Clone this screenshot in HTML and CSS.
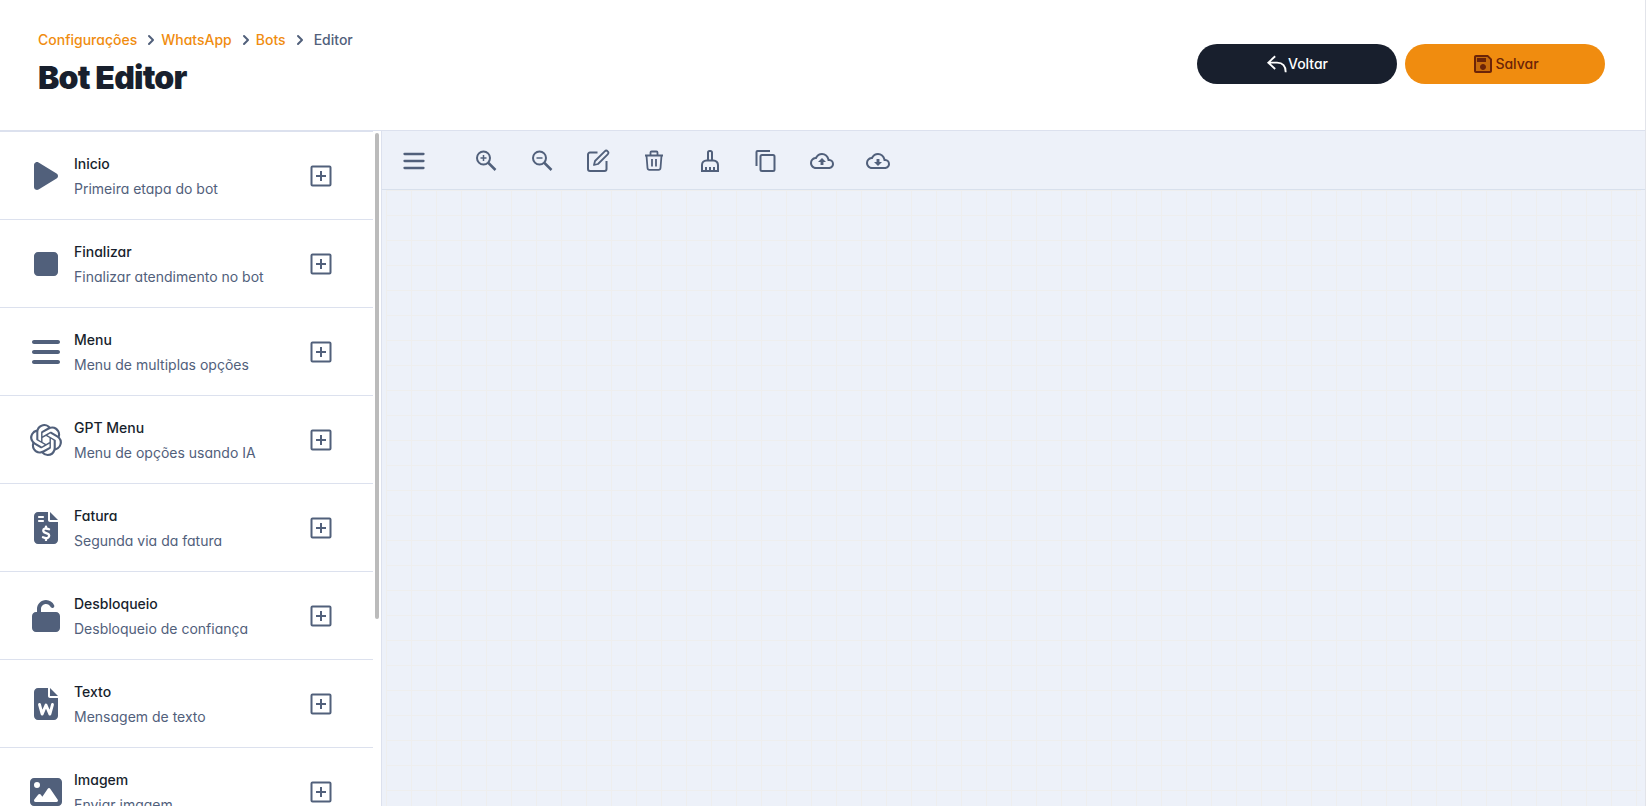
FILE: index.html
```html
<!DOCTYPE html>
<html lang="pt-BR">
<head>
<meta charset="utf-8">
<title>Bot Editor</title>
<link rel="stylesheet" href="styles.css">
</head>
<body>
<svg class="defs" aria-hidden="true">
  <symbol id="plus" viewBox="0 0 24 24"><path fill="none" stroke="currentColor" stroke-width="2" stroke-linejoin="round" d="M3.500 2.500h17a1 1 0 0 1 1 1v17a1 1 0 0 1-1 1h-17a1 1 0 0 1-1-1v-17a1 1 0 0 1 1-1z"/><path fill="none" stroke="currentColor" stroke-width="2" d="M12 7v10M7 12h10"/></symbol>
  <symbol id="chev" viewBox="0 0 20 20"><path fill="currentColor" fill-rule="evenodd" d="M7.293 14.707a1 1 0 0 1 0-1.414L10.586 10 7.293 6.707a1 1 0 0 1 1.414-1.414l4 4a1 1 0 0 1 0 1.414l-4 4a1 1 0 0 1-1.414 0z"/></symbol>
</svg>
<div class="page">
  <header class="header">
    <div class="heading">
      <nav class="crumbs" aria-label="Navegação">
        <a href="#">Configurações</a>
        <svg class="chev"><use href="#chev"/></svg><a href="#">WhatsApp</a>
        <svg class="chev"><use href="#chev"/></svg><a href="#">Bots</a>
        <svg class="chev"><use href="#chev"/></svg><span class="current">Editor</span>
      </nav>
      <h1>Bot Editor</h1>
    </div>
    <div class="actions">
      <button class="btn dark" type="button"><svg viewBox="0 0 24 24" fill="none" stroke="currentColor" stroke-width="2"><path d="M10 3.500 2.500 10.500 10 17.500M2.500 10.500H12c6 0 9.500 3.500 9.500 10.500"/></svg>Voltar</button>
      <button class="btn orange" type="button"><svg viewBox="0 0 24 24"><path fill="currentColor" opacity=".3" d="M5 5v14h14V7.830L16.170 5H5z"/><path fill="currentColor" d="M17 3H5c-1.110 0-2 .9-2 2v14c0 1.100.89 2 2 2h14c1.100 0 2-.9 2-2V7l-4-4zm2 16H5V5h11.170L19 7.830V19zM12 12c-1.660 0-3 1.340-3 3s1.340 3 3 3 3-1.340 3-3-1.340-3-3-3zM6 6h9v4H6z"/></svg>Salvar</button>
    </div>
  </header>
  <main class="main">
    <aside class="sidebar">
      <ul class="list">
        <li class="item"><svg class="icon" viewBox="-64 0 512 512"><path d="M73 39c-14.800-9.100-33.400-9.400-48.500-.9S0 62.600 0 80v352c0 17.400 9.400 33.400 24.500 41.900s33.700 8.100 48.500-.9L361 297c14.300-8.700 23-24.200 23-41s-8.700-32.200-23-41L73 39z"/></svg><div class="text"><strong>Inicio</strong><span>Primeira etapa do bot</span></div><button class="add" type="button" aria-label="Adicionar Inicio"><svg><use href="#plus"/></svg></button></li>
        <li class="item"><svg class="icon" viewBox="-64 0 512 512"><path d="M0 128c0-35.300 28.700-64 64-64h256c35.300 0 64 28.700 64 64v256c0 35.300-28.700 64-64 64H64c-35.300 0-64-28.700-64-64V128z"/></svg><div class="text"><strong>Finalizar</strong><span>Finalizar atendimento no bot</span></div><button class="add" type="button" aria-label="Adicionar Finalizar"><svg><use href="#plus"/></svg></button></li>
        <li class="item"><svg class="icon" viewBox="-32 0 512 512"><path d="M0 96c0-17.700 14.300-32 32-32h384c17.700 0 32 14.300 32 32s-14.300 32-32 32H32C14.300 128 0 113.700 0 96zm0 160c0-17.700 14.300-32 32-32h384c17.700 0 32 14.300 32 32s-14.300 32-32 32H32c-17.700 0-32-14.300-32-32zm448 160c0 17.700-14.300 32-32 32H32c-17.700 0-32-14.300-32-32s14.300-32 32-32h384c17.700 0 32 14.300 32 32z"/></svg><div class="text"><strong>Menu</strong><span>Menu de multiplas opções</span></div><button class="add" type="button" aria-label="Adicionar Menu"><svg><use href="#plus"/></svg></button></li>
        <li class="item"><svg class="icon" viewBox="0 0 24 24"><path d="M22.2819 9.8211a5.9847 5.9847 0 0 0-.5157-4.9108 6.0462 6.0462 0 0 0-6.5098-2.9A6.0651 6.0651 0 0 0 4.9807 4.1818a5.9847 5.9847 0 0 0-3.9977 2.9 6.0462 6.0462 0 0 0 .7427 7.0966 5.98 5.98 0 0 0 .511 4.9107 6.051 6.051 0 0 0 6.5146 2.9001A5.9847 5.9847 0 0 0 13.2599 24a6.0557 6.0557 0 0 0 5.7718-4.2058 5.9894 5.9894 0 0 0 3.9977-2.9001 6.0557 6.0557 0 0 0-.7475-7.073zm-9.022 12.6081a4.4755 4.4755 0 0 1-2.8764-1.0408l.1419-.0804 4.7783-2.7582a.7948.7948 0 0 0 .3927-.6813v-6.7369l2.02 1.1686a.071.071 0 0 1 .038.052v5.5826a4.504 4.504 0 0 1-4.4945 4.4944zm-9.6607-4.1254a4.4708 4.4708 0 0 1-.5346-3.0137l.142.0852 4.783 2.7582a.7712.7712 0 0 0 .7806 0l5.8428-3.3685v2.3324a.0804.0804 0 0 1-.0332.0615L9.74 19.9502a4.4992 4.4992 0 0 1-6.1408-1.6464zM2.3408 7.8956a4.485 4.485 0 0 1 2.3655-1.9728V11.6a.7664.7664 0 0 0 .3879.6765l5.8144 3.3543-2.0201 1.1685a.0757.0757 0 0 1-.071 0l-4.8303-2.7865A4.504 4.504 0 0 1 2.3408 7.872zm16.5963 3.8558L13.1038 8.364 15.1192 7.2a.0757.0757 0 0 1 .071 0l4.8303 2.7913a4.4944 4.4944 0 0 1-.6765 8.1042v-5.6772a.79.79 0 0 0-.407-.667zm2.0107-3.0231l-.142-.0852-4.7735-2.7818a.7759.7759 0 0 0-.7854 0L9.409 9.2297V6.8974a.0662.0662 0 0 1 .0284-.0615l4.8303-2.7866a4.4992 4.4992 0 0 1 6.6802 4.66zM8.3065 12.863l-2.02-1.1638a.0804.0804 0 0 1-.038-.0567V6.0742a4.4992 4.4992 0 0 1 7.3757-3.4537l-.142.0805L8.704 5.459a.7948.7948 0 0 0-.3927.6813zm1.0976-2.3654l2.602-1.4998 2.6069 1.4998v2.9994l-2.5974 1.4997-2.6067-1.4997Z"/></svg><div class="text"><strong>GPT Menu</strong><span>Menu de opções usando IA</span></div><button class="add" type="button" aria-label="Adicionar GPT Menu"><svg><use href="#plus"/></svg></button></li>
        <li class="item"><svg class="icon" viewBox="-64 0 512 512"><path fill-rule="evenodd" d="M64 0h160v128c0 17.700 14.300 32 32 32h128v288c0 35.300-28.700 64-64 64H64c-35.300 0-64-28.700-64-64V64C0 28.700 28.700 0 64 0zM80 64c-8.800 0-16 7.200-16 16s7.200 16 16 16h64c8.800 0 16-7.200 16-16s-7.200-16-16-16H80zm0 64c-8.800 0-16 7.200-16 16s7.200 16 16 16h64c8.800 0 16-7.200 16-16s-7.200-16-16-16H80z"/><path d="M256 0v128h128z"/><path fill="none" stroke="#fff" stroke-width="38" stroke-linecap="round" d="M192 236v24m0 160v26M240 276c-24-10-50-16-68-10-28 9-32 46-6 60 22 12 52 12 68 30 18 24 4 56-26 62-22 4-44-4-64-14"/></svg><div class="text"><strong>Fatura</strong><span>Segunda via da fatura</span></div><button class="add" type="button" aria-label="Adicionar Fatura"><svg><use href="#plus"/></svg></button></li>
        <li class="item"><svg class="icon" viewBox="-32 0 512 512"><path d="M144 144c0-44.200 35.800-80 80-80 31.900 0 59.400 18.600 72.300 45.700 7.600 16 26.700 22.800 42.600 15.200s22.800-26.700 15.200-42.600C331 33.700 281.500 0 224 0 144.500 0 80 64.500 80 144v48H64c-35.300 0-64 28.700-64 64v192c0 35.300 28.700 64 64 64h320c35.300 0 64-28.700 64-64V256c0-35.300-28.700-64-64-64H144v-48z"/></svg><div class="text"><strong>Desbloqueio</strong><span>Desbloqueio de confiança</span></div><button class="add" type="button" aria-label="Adicionar Desbloqueio"><svg><use href="#plus"/></svg></button></li>
        <li class="item"><svg class="icon" viewBox="-64 0 512 512"><path d="M64 0h160v128c0 17.700 14.300 32 32 32h128v288c0 35.300-28.700 64-64 64H64c-35.300 0-64-28.700-64-64V64C0 28.700 28.700 0 64 0z"/><path d="M256 0v128h128z"/><path fill="none" stroke="#fff" stroke-width="46" stroke-linecap="round" stroke-linejoin="round" d="M88 264l42 154 62-146 62 146 42-154"/></svg><div class="text"><strong>Texto</strong><span>Mensagem de texto</span></div><button class="add" type="button" aria-label="Adicionar Texto"><svg><use href="#plus"/></svg></button></li>
        <li class="item"><svg class="icon" viewBox="0 0 512 512"><path d="M0 96c0-35.300 28.700-64 64-64h384c35.300 0 64 28.700 64 64v320c0 35.300-28.700 64-64 64H64c-35.300 0-64-28.700-64-64V96zm323.800 106.500c-4.500-6.600-11.900-10.500-19.800-10.500s-15.400 3.900-19.800 10.500l-87 127.600-26.500-33.100c-4.600-5.700-11.500-9-18.700-9s-14.200 3.300-18.700 9l-64 80c-5.800 7.200-6.900 17.100-2.900 25.400S78.800 416 88 416h336c8.900 0 17.100-4.900 21.200-12.800s3.600-17.400-1.400-24.700l-120-176zM112 192a48 48 0 1 0 0-96 48 48 0 1 0 0 96z"/></svg><div class="text"><strong>Imagem</strong><span>Enviar imagem</span></div><button class="add" type="button" aria-label="Adicionar Imagem"><svg><use href="#plus"/></svg></button></li>
      </ul>
      <div class="track"><div class="thumb"></div></div>
    </aside>
    <section class="editor">
      <div class="toolbar">
        <button class="tool menu" type="button" aria-label="Menu"><svg viewBox="0 0 24 24"><path stroke-width="2.300" d="M2.500 5h19M2.500 12h19M2.500 19h19" stroke-linecap="round"/></svg></button>
        <button class="tool" type="button" aria-label="Ampliar"><svg viewBox="0 0 24 24"><circle cx="9.500" cy="9" r="6.500"/><path stroke-width="2.500" d="M14 13.500l7.500 7.500"/><path stroke-width="1.500" d="M9.500 6v6M6.500 9h6"/></svg></button>
        <button class="tool" type="button" aria-label="Reduzir"><svg viewBox="0 0 24 24"><circle cx="9.500" cy="9" r="6.500"/><path stroke-width="2.500" d="M14 13.500l7.500 7.500"/><path stroke-width="1.500" d="M6.500 9h6"/></svg></button>
        <button class="tool" type="button" aria-label="Editar"><svg viewBox="0 0 24 24" stroke-linejoin="round"><path d="M11.500 3.500H4a2 2 0 0 0-2 2V20a2 2 0 0 0 2 2h14.500a2 2 0 0 0 2-2v-8"/><path stroke-width="1.800" d="M18.700 2.300a2.100 2.100 0 0 1 3 3L12 15l-4 1 1-4 9.700-9.700z"/></svg></button>
        <button class="tool" type="button" aria-label="Excluir"><svg viewBox="0 0 24 24"><path stroke-width="1.800" d="M3 6.500h18M4.500 6.500l1 12.500a2 2 0 0 0 2 1.800h9a2 2 0 0 0 2-1.800l1-12.500M8.500 6V3.500a1 1 0 0 1 1-1h5a1 1 0 0 1 1 1V6M10 10v7.500M14 10v7.500"/></svg></button>
        <button class="tool" type="button" aria-label="Limpar"><svg viewBox="0 0 24 24"><path d="M10 11.500V3.500a1.500 1.500 0 0 1 1.500-1.500h1A1.500 1.500 0 0 1 14 3.500v8M4 22v-6a4.500 4.500 0 0 1 4.500-4.500h7A4.500 4.500 0 0 1 20 16v6H4zM8 22v-4M12 22v-4M16 22v-4"/></svg></button>
        <button class="tool" type="button" aria-label="Copiar"><svg viewBox="0 0 24 24"><path d="M2.500 17V3a1 1 0 0 1 1-1H16"/><rect x="6.500" y="6" width="14" height="16" rx="1.500"/></svg></button>
        <button class="tool" type="button" aria-label="Enviar"><svg viewBox="0 0 24 24"><path d="M19.350 10.040A7.490 7.490 0 0 0 12 4C9.110 4 6.600 5.640 5.350 8.040A5.994 5.994 0 0 0 0 14c0 3.310 2.690 6 6 6h13c2.760 0 5-2.240 5-5 0-2.640-2.050-4.780-4.650-4.960zM19 18H6c-2.210 0-4-1.790-4-4 0-2.050 1.530-3.760 3.560-3.970l1.070-.11.500-.95A5.469 5.469 0 0 1 12 6c2.620 0 4.880 1.860 5.390 4.430l.3 1.500 1.530.11A2.980 2.980 0 0 1 22 15c0 1.650-1.350 3-3 3zM8 13h2.550v3h2.900v-3H16l-4-4z" fill="currentColor" stroke="none"/></svg></button>
        <button class="tool" type="button" aria-label="Baixar"><svg viewBox="0 0 24 24"><path d="M19.350 10.040A7.490 7.490 0 0 0 12 4C9.110 4 6.600 5.640 5.350 8.040A5.994 5.994 0 0 0 0 14c0 3.310 2.690 6 6 6h13c2.760 0 5-2.240 5-5 0-2.640-2.050-4.780-4.650-4.960zM19 18H6c-2.210 0-4-1.790-4-4 0-2.050 1.530-3.760 3.560-3.970l1.070-.11.500-.95A5.469 5.469 0 0 1 12 6c2.620 0 4.880 1.860 5.390 4.430l.3 1.500 1.530.11A2.980 2.980 0 0 1 22 15c0 1.650-1.350 3-3 3zm-5.550-8h-2.900v3H8l4 4 4-4h-2.550z" fill="currentColor" stroke="none"/></svg></button>
      </div>
      <div class="canvas"><div class="grid"></div></div>
    </section>
  </main>
</div>
</body>
</html>
```
FILE: styles.css
```css
* { box-sizing: border-box; }
body {
  margin: 0;
  background: #fff;
  color: #1e293b;
  font: 14px/24px Inter, "Liberation Sans", sans-serif;
  font-feature-settings: "cv11";
}
button { font: inherit; font-feature-settings: inherit; border: 0; padding: 0; background: none; color: inherit; }
ul { list-style: none; margin: 0; padding: 0; }
svg { display: block; flex: none; }
.defs { position: absolute; width: 0; height: 0; }
.page { display: flex; flex-direction: column; height: 100vh; overflow: hidden; border-right: 1px solid #e2e4ea; }
.header {
  display: flex; justify-content: space-between; align-items: flex-start;
  flex: none; padding: 28px 40px 34px 38px;
  border-bottom: 1px solid #dce1ee;
}
.crumbs { display: flex; align-items: center; font-weight: 500; color: #51607b; }
.crumbs a { color: #f08c0f; text-decoration: none; }
.chev { width: 20px; height: 20px; margin-left: 4px; }
.current { margin-left: 4px; }
h1 { margin: 8px 0 0; font-size: 32px; line-height: 36px; font-weight: 900; letter-spacing: -0.025em; color: #181f2d; }
.actions { display: flex; gap: 8px; padding-top: 16px; }
.btn {
  display: flex; align-items: center; justify-content: center;
  width: 200px; height: 40px; border-radius: 20px; font-weight: 500;
}
.dark { background: #181f2d; color: #fff; }
.dark svg { width: 22px; height: 22px; }
.orange { background: #f08c0f; color: #6b2408; }
.orange svg { width: 24px; height: 24px; }
.main { display: flex; flex: 1; min-height: 0; }
.sidebar { display: flex; width: 382px; flex: none; border-right: 1px solid #dce1ee; }
.list { flex: 1; overflow-y: auto; scrollbar-width: none; border-top: 1px solid #dce1ee; }
.item {
  display: flex; align-items: center; height: 88px;
  padding: 0 40px 0 30px; border-bottom: 1px solid #dce1ee;
}
.icon { width: 32px; height: 32px; fill: #51607b; }
.text { display: flex; flex-direction: column; flex: 1; margin-left: 12px; }
.text strong { font-weight: 500; line-height: 25px; color: #181f2d; }
.text span { line-height: 25px; color: #51607b; }
.add svg { width: 24px; height: 24px; color: #51607b; }
.track { width: 8px; padding: 2px; }
.thumb { width: 4px; height: 72.5%; border-radius: 2px; background: #bbb; }
.editor { display: flex; flex-direction: column; flex: 1; min-width: 0; background: #edf1f9; }
.toolbar { display: flex; align-items: center; gap: 32px; height: 59px; flex: none; padding: 2px 20px 0; border-bottom: 1px solid #d8e0ec; }
.tool svg { width: 24px; height: 24px; fill: none; stroke: currentColor; stroke-width: 2; color: #51607b; }
.menu { margin-right: 16px; }
.canvas { flex: 1; padding: 0 4px; }
.grid {
  height: 100%;
  background-image: linear-gradient(to right, #eeeeee 1px, transparent 1px), linear-gradient(#eeeeee 1px, transparent 1px);
  background-size: 25px 25px;
}
```
